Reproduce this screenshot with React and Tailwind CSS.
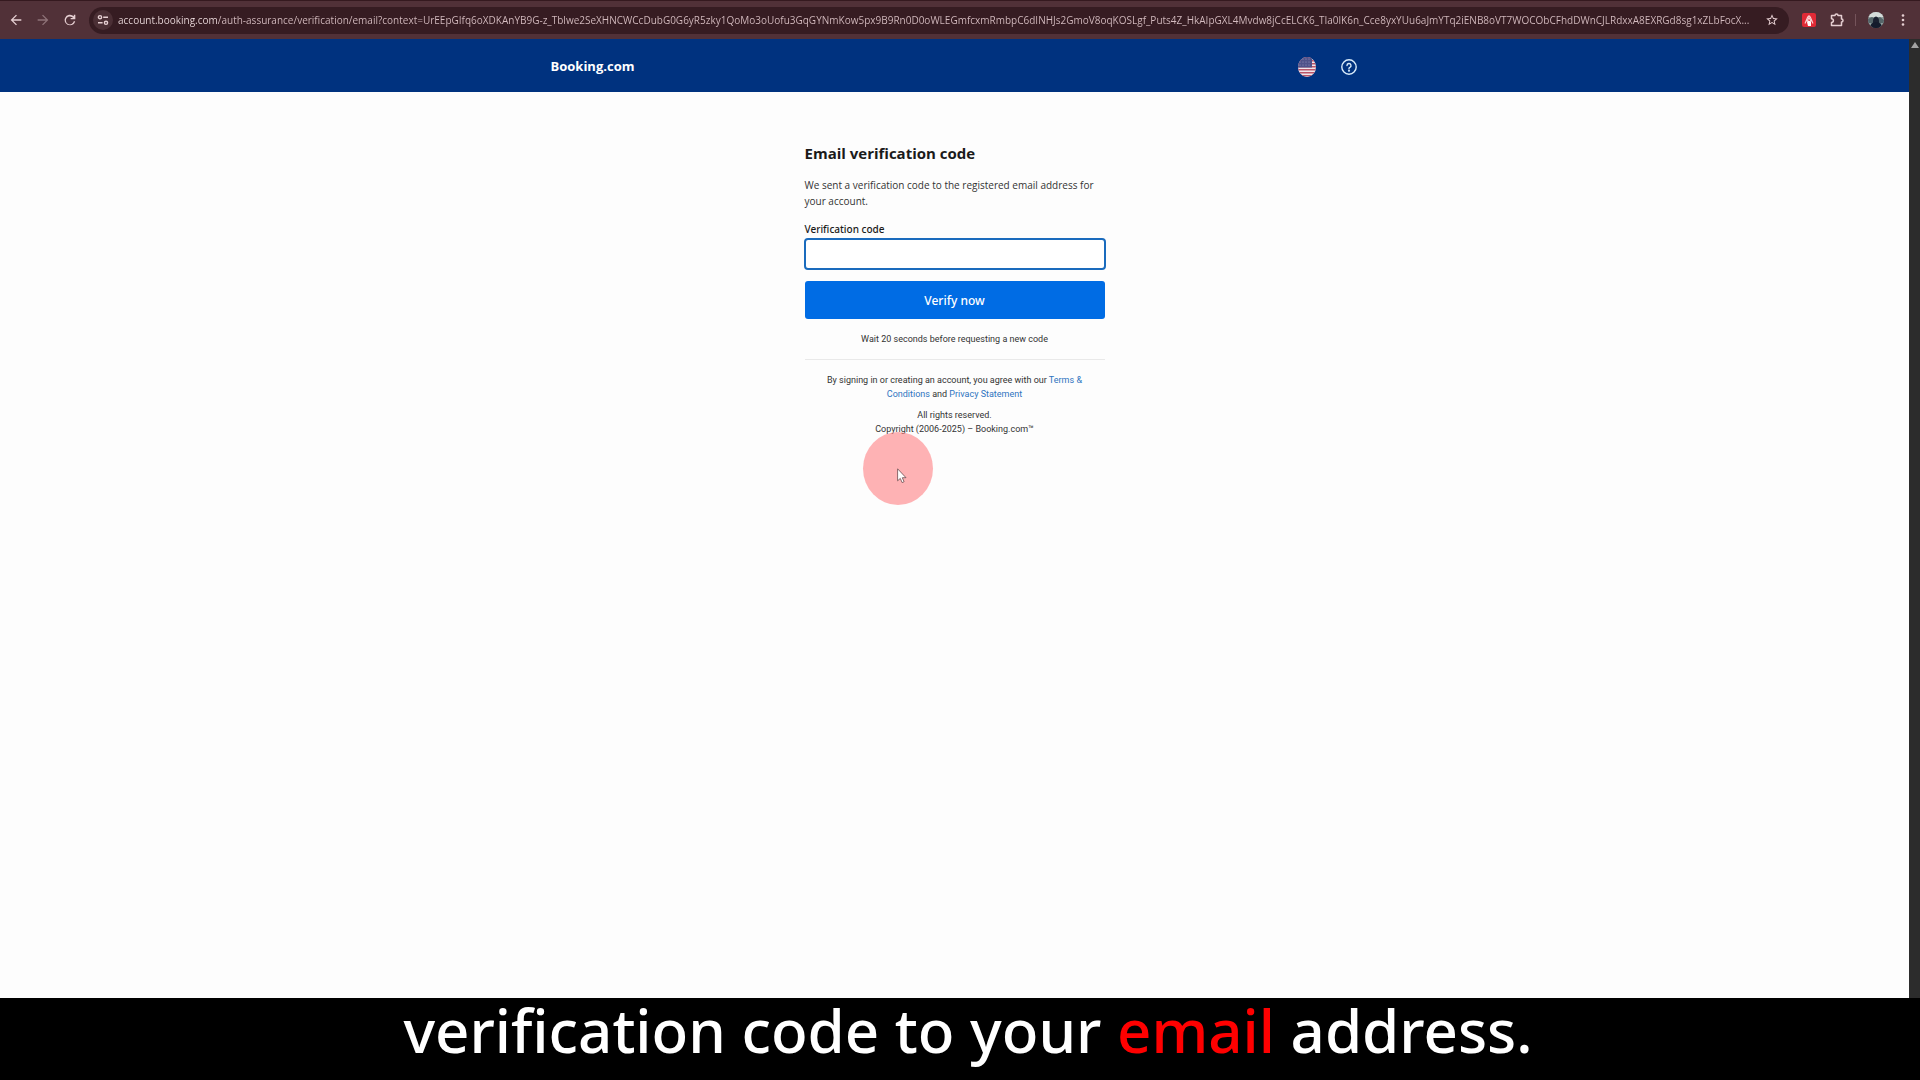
import React, { useState } from "react";

const PAGE_URL =
    "account.booking.com/auth-assurance/verification/email?context=UrEEpGIfq6oXDKAnYB9G-z_Tblwe2SeXHNCWCcDubG0G6yR5zky1QoMo3oUofu3GqGYNmKow5px9B9Rn0D0oWLEGmfcxmRmbpC6dINHJs2GmoV8oqKOSLgf_Puts4Z_HkAIpGXL4Mvdw8jCcELCK6_TIa0lK6n_Cce8yxYUu6aJmYTq2iENB8oVT7WOCObCFhdDWnCJLRdxxA8EXRGd8sg1xZLbFocX...";

// 24x24 icon paths used in the toolbar
const icons = {
    back: "M20 11H7.83l5.59-5.59L12 4l-8 8 8 8 1.41-1.41L7.83 13H20v-2z",
    forward: "M12 4l-1.41 1.41L16.17 11H4v2h12.17l-5.58 5.59L12 20l8-8z",
    reload: "M12 20a8 8 0 1 1 5.7-13.6V4H20v7h-7V9h3.7A6 6 0 1 0 17.7 14h2.1A8 8 0 0 1 12 20z",
    star: "M22 9.24l-7.19-.62L12 2 9.19 8.63 2 9.24l5.46 4.73L5.82 21 12 17.27 18.18 21l-1.63-7.03L22 9.24zM12 15.4l-3.76 2.27 1-4.28-3.32-2.88 4.38-.38L12 6.1l1.71 4.04 4.38.38-3.32 2.88 1 4.28L12 15.4z",
};

function Icon({ d, className }) {
    return (
        <svg viewBox="0 0 24 24" className={className} fill="currentColor" aria-hidden="true">
            <path d={d} />
        </svg>
    );
}

function UsFlag() {
    return (
        <svg viewBox="0 0 18 20" className="w-[18px] h-5" aria-hidden="true">
            <clipPath id="flag">
                <ellipse cx="9" cy="10" rx="9" ry="10" />
            </clipPath>
            <g clipPath="url(#flag)">
                <rect width="18" height="20" fill="#efe6ec" />
                {[0, 3, 6, 9, 12, 15, 18].map((y) => (
                    <rect key={y} y={y} width="18" height="1.5" fill="#bb5568" />
                ))}
                <rect width="14" height="10.5" fill="#50528a" />
                {[2, 5, 8].map((y) =>
                    [2, 5, 8, 11].map((x) => (
                        <circle key={`${x}-${y}`} cx={x} cy={y} r="0.5" fill="#a9a6cc" />
                    ))
                )}
            </g>
        </svg>
    );
}

function Toolbar() {
    return (
        <div className="flex h-[39px] shrink-0 items-center border-t border-[#35191f] bg-[#513138] pl-2 pr-[10px] text-[#e6cfd2]">
            <button aria-label="Back" className="mr-[11px]">
                <Icon d={icons.back} className="size-4" />
            </button>
            <button aria-label="Forward" className="mr-[11px] text-[#8f7378]">
                <Icon d={icons.forward} className="size-4" />
            </button>
            <button aria-label="Reload" className="mr-[11px]">
                <Icon d={icons.reload} className="size-4" />
            </button>

            {/* Address bar */}
            <div className="flex h-[27px] flex-1 items-center rounded-full bg-[#361c22] pl-1 pr-[10px]">
                <button
                    aria-label="View site information"
                    className="flex size-5 items-center justify-center rounded-full bg-[#4b2f35]"
                >
                    <svg viewBox="0 0 12 12" className="size-3" fill="none" stroke="currentColor" strokeWidth="1.4">
                        <circle cx="3" cy="3.2" r="1.6" />
                        <path d="M6.2 3.2H11M1 8.8h4.6" />
                        <circle cx="9" cy="8.8" r="1.6" />
                    </svg>
                </button>
                <input
                    aria-label="Address"
                    readOnly
                    value={PAGE_URL}
                    className="min-w-0 flex-1 bg-[linear-gradient(90deg,#f0dfe1_100px,#d6bdc1_100px)] bg-clip-text ml-[5px] text-[10px] leading-5 text-transparent outline-none"
                />
                <button aria-label="Bookmark this tab">
                    <Icon d={icons.star} className="size-[14px]" />
                </button>
            </div>

            <div className="flex items-center">
                <button aria-label="Ad blocker" className="ml-[13px]">
                    <svg viewBox="0 0 14 14" className="size-[14px]">
                        <rect width="14" height="14" rx="2" fill="#e02a36" />
                        <path
                            d="M3 10.5 5.6 4.2Q7 1.6 8.4 4.2L11 10.5M5 8.5 7 4.5 9 8.5"
                            fill="none"
                            stroke="#fbd5d7"
                            strokeWidth="1.1"
                        />
                        <path d="M5 9l1.2-1.5 2.8 1V13H6z" fill="#fff" />
                    </svg>
                </button>
                <button aria-label="Extensions" className="ml-[13px]">
                    <svg viewBox="0 0 16 16" className="size-4" fill="none" stroke="currentColor" strokeWidth="1.5" strokeLinejoin="round">
                        <path d="M2.5 3.5H6a1.5 1.5 0 0 1 3 0h3.5V7a1.5 1.5 0 0 1 0 3v3.5h-10V10.5a1.8 1.8 0 0 0 0-3.8z" />
                    </svg>
                </button>
                <span className="ml-[10px] h-3 w-px bg-[#75545b]" />
                <button aria-label="Profile" className="ml-3">
                    <svg viewBox="0 0 16 16" className="size-4">
                        <clipPath id="avatar">
                            <circle cx="8" cy="8" r="8" />
                        </clipPath>
                        <g clipPath="url(#avatar)">
                            <rect width="16" height="16" fill="#8fa09e" />
                            <rect width="16" height="5" fill="#d5dcda" />
                            <path d="M0 7l4-2 3 2 5-2 4 3v3H0z" fill="#56666a" />
                            <path d="M5 16V9q0-4 3-4.5Q11 5 11 9v7z" fill="#1a2030" />
                            <path d="M2 16q0-6 6-6t6 6z" fill="#141b2c" />
                        </g>
                    </svg>
                </button>
                <button aria-label="Menu" className="ml-3">
                    <svg viewBox="0 0 14 14" className="size-[14px]" fill="currentColor">
                        <circle cx="7" cy="2.5" r="1.3" />
                        <circle cx="7" cy="7" r="1.3" />
                        <circle cx="7" cy="11.5" r="1.3" />
                    </svg>
                </button>
            </div>
        </div>
    );
}

function Header() {
    return (
        <header className="bg-[#00327f]">
            <div className="mx-auto flex h-[53px] w-full max-w-[808px] items-center pt-[2px] pr-[2px]">
                <a href="#home" className="text-[13px] font-bold text-white">
                    Booking.com
                </a>
                <button aria-label="Select language" className="ml-auto">
                    <UsFlag />
                </button>
                <button aria-label="Help" className="ml-[25px] text-[#d8ebfa]">
                    <svg viewBox="0 0 16 16" className="size-4" fill="none" stroke="currentColor" strokeWidth="1.4">
                        <circle cx="8" cy="8" r="7.2" />
                        <path d="M6 6.5a2 2 0 1 1 2.9 1.8Q8 8.7 8 9.6" strokeLinecap="round" />
                        <circle cx="8" cy="11.7" r="0.4" />
                    </svg>
                </button>
            </div>
        </header>
    );
}

function VerificationForm() {
    const [code, setCode] = useState("");

    return (
        <main className="mx-auto w-[300px] pt-[52px] text-[#333]">
            <form onSubmit={(e) => e.preventDefault()}>
                <h1 className="text-[15px] leading-[18px] font-bold text-[#1a1a1a]">Email verification code</h1>
                <p className="mt-[15px] text-[10px] leading-4">
                    We sent a verification code to the registered email address for your account.
                </p>
                <label
                    htmlFor="code"
                    className="mt-3 block font-['Noto_Sans',sans-serif] text-[10px] leading-4 font-medium text-[#1a1a1a]"
                >
                    Verification code
                </label>
                <input
                    id="code"
                    value={code}
                    onChange={(e) => setCode(e.target.value)}
                    className="-mx-px mt-px block h-8 w-[302px] rounded-[4px] border-2 border-[#1a6bbd] bg-white px-2 text-[11px] outline-none"
                />
                <button className="mt-[11px] block h-[38px] w-full rounded-[3px] bg-[#006ce4] pt-px font-['Noto_Sans',sans-serif] text-[12px] font-medium text-white">
                    Verify now
                </button>
                <p className="mt-3 text-center font-[Roboto,sans-serif] text-[9px] leading-4">
                    Wait 20 seconds before requesting a new code
                </p>
            </form>

            <footer className="mt-3 border-t border-[#e9e9e9] px-4 pt-[13px] text-center font-[Roboto,sans-serif] text-[9px] leading-[14px]">
                <p>
                    By signing in or creating an account, you agree with our{" "}
                    <a href="#terms" className="text-[#2f74c0]">
                        Terms &amp; Conditions
                    </a>{" "}
                    and{" "}
                    <a href="#privacy" className="text-[#2f74c0]">
                        Privacy Statement
                    </a>
                </p>
                <p className="mt-[7px]">
                    All rights reserved.
                    <br />
                    Copyright (2006-2025) – Booking.com™
                </p>
            </footer>
        </main>
    );
}

// Pointer with its highlight circle
function Pointer() {
    return (
        <div className="pointer-events-none absolute left-[863px] top-[393px] h-[73px] w-[70px] rounded-[50%] bg-[#ff8083]/60">
            <svg viewBox="0 0 10 16" className="absolute left-[34px] top-9 h-4 w-[10px]">
                <path
                    d="M.6.8v12l2.7-2.4 1.8 4.2 2-.9-1.8-4H9z"
                    fill="#fff"
                    stroke="#6b4b4e"
                    strokeWidth="0.8"
                    strokeLinejoin="round"
                />
            </svg>
        </div>
    );
}

export default function App() {
    return (
        <div className="flex min-h-screen flex-col bg-[#fdfdfd] font-['Open_Sans','Noto_Sans',sans-serif]">
            <Toolbar />
            <div className="relative flex flex-1">
                <div className="flex-1 bg-[#fdfdfd]">
                    <Header />
                    <VerificationForm />
                </div>
                {/* Scrollbar */}
                <div className="w-[11px] bg-[#2c2c2c] pt-[3px]">
                    <svg viewBox="0 0 8 6" className="mx-auto h-[6px] w-2">
                        <path d="M4 0 8 6H0z" fill="#a3a3a3" />
                    </svg>
                </div>
                <Pointer />
            </div>
            <p className="h-[82px] shrink-0 bg-black pl-4 text-center font-['Noto_Sans',sans-serif] text-[60px] leading-[64px] font-medium text-white">
                verification code to your <span className="text-[#ff0000]">email</span> address.
            </p>
        </div>
    );
}
